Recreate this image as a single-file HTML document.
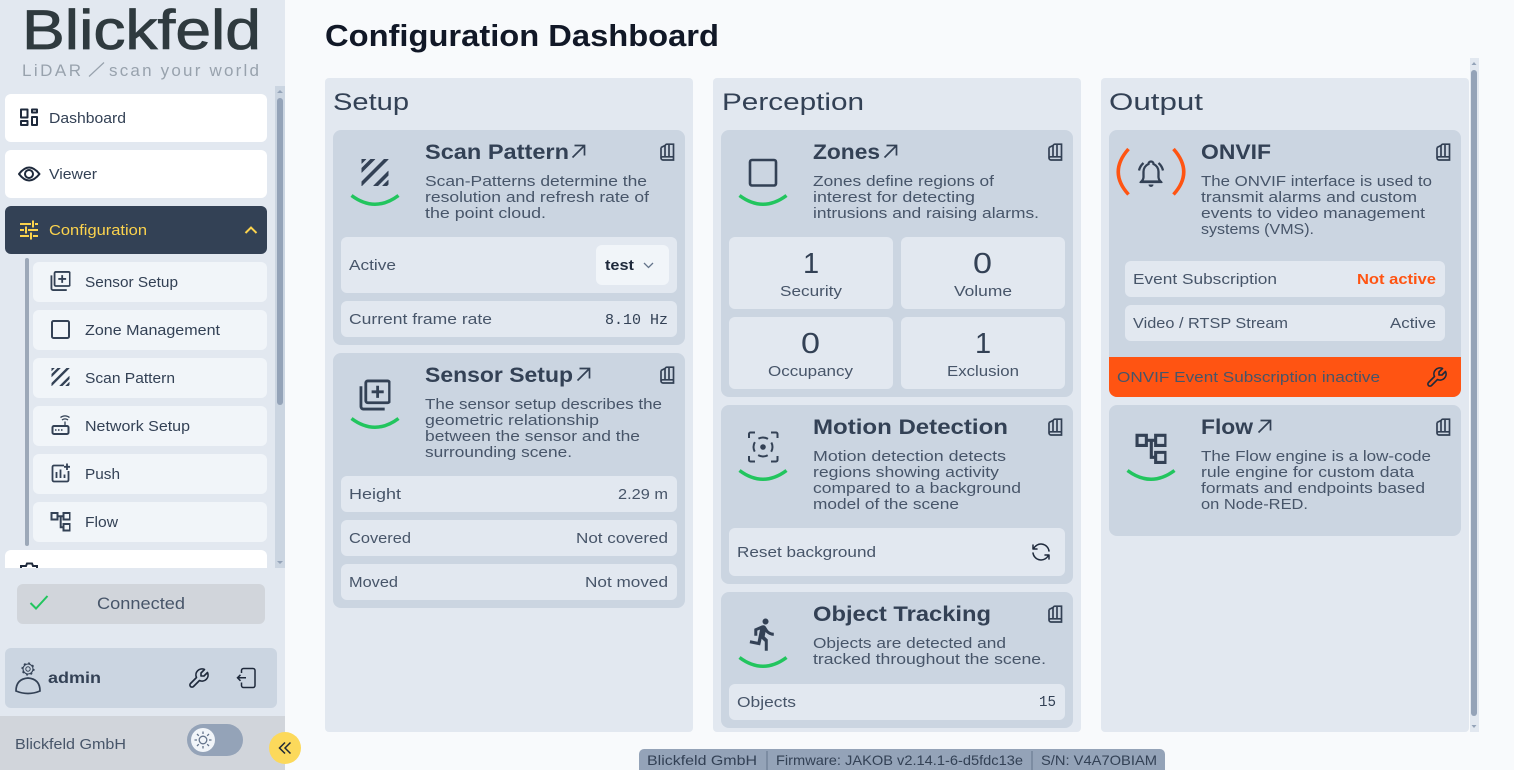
<!DOCTYPE html>
<html lang="en"><head><meta charset="utf-8"><title>Configuration Dashboard</title>
<style>
html,body{margin:0;padding:0;background:#f8fafc;overflow:hidden}
svg{display:block}
text{font-family:"Liberation Sans",sans-serif;fill:#475569;font-size:14.5px}
.n{fill:#334155}
.m{font-family:"Liberation Mono",monospace;fill:#334155;font-size:14px}
.t{font-size:21px;font-weight:700;fill:#334155}
.h{font-size:24.5px;fill:#334155}
.b{font-size:14px;fill:#334155}
.s{fill:none;stroke:#334155;stroke-width:2;stroke-linecap:round;stroke-linejoin:round}
.k{fill:none;stroke:#1e293b;stroke-width:2;stroke-linejoin:round}
</style></head><body>
<svg xmlns="http://www.w3.org/2000/svg" width="1514" height="770" viewBox="0 0 1514 770">
<defs>
<symbol id="arc" viewBox="0 0 50 16" overflow="visible"><path d="M1.5 1.5Q25 19 48.500 1.500" fill="none" stroke="#22c55e" stroke-width="3.500"/></symbol>
<symbol id="ar" viewBox="0 0 15 15"><path d="M1.500 13.500L13 2M3.500 1.500H13.500V11.500" fill="none" stroke="#334155" stroke-width="1.700"/></symbol>
<symbol id="bk" viewBox="0 0 15 18"><path d="M1 4.500V15a2 2 0 0 0 2 2H13.500V1.200H7a2 2 0 0 0-2 1.800V14M1 15a1.600 1.600 0 0 1 1.600-1.200H13.500M1 4.500L5 2.500M9 1.200V13.800" fill="none" stroke="#334155" stroke-width="1.700"/></symbol>
<symbol id="scan" viewBox="0 0 27 27"><path d="M-1 3.500L3.500-1M-1 12.500L12.500-1M-1 26L26-1M13 28L28 13M22 28L28 22" fill="none" stroke="#334155" stroke-width="3.600"/></symbol>
<symbol id="sens" viewBox="0 0 32 32"><rect x="6.500" y="1.500" width="24.500" height="22.500" rx="2" fill="none" stroke="#334155" stroke-width="2.900"/><path d="M1.500 7V28a2.500 2.500 0 0 0 2.500 2.500H26M12.500 12.700H25M18.700 6.500V19" fill="none" stroke="#334155" stroke-width="2.900"/></symbol>
<symbol id="flow" viewBox="0 0 20 20"><path d="M1 1.500H7V8H1ZM13 1.500H19.500V8H13ZM13 12.500H19.500V19H13ZM7 4.700H13M10.200 4.700V15.700H13" fill="none" stroke="#334155" stroke-width="2"/></symbol>
<symbol id="wr" viewBox="0 0 24 24"><path d="M17 10h-3v-3l3.500-3.500a6 6 0 0 0-8 8l-6 6a2 2 0 0 0 3 3l6-6a6 6 0 0 0 8-8l-3.500 3.500" fill="none" stroke="#1e293b" stroke-width="1.600" stroke-linejoin="round" stroke-linecap="round"/></symbol>
<clipPath id="nv"><rect x="0" y="86" width="285" height="482"/></clipPath>
</defs>

<rect width="1514" height="770" fill="#f8fafc"/>

<!-- sidebar -->
<rect width="285" height="770" fill="#e2e8f0"/>
<text x="22" y="49" style="font-size:56px;fill:#2f3a3f" stroke="#2f3a3f" stroke-width=".8" textLength="239" lengthAdjust="spacingAndGlyphs">Blickfeld</text>
<text x="22" y="76" style="font-size:17px;fill:#98a2ad" textLength="59" lengthAdjust="spacing">LiDAR</text>
<path d="M89 76.500L104 62.500" stroke="#98a2ad" stroke-width="1.200"/>
<text x="109" y="76" style="font-size:17px;fill:#98a2ad" textLength="150" lengthAdjust="spacing">scan your world</text>

<rect x="275" y="86" width="10" height="482" fill="#cbd5e1"/>
<rect x="277" y="98" width="6" height="307" rx="3" fill="#94a3b8"/>
<path d="M277 93h6l-3-3zM277 561h6l-3 3z" fill="#94a3b8"/>

<g clip-path="url(#nv)">
<rect x="5" y="94" width="262" height="48" rx="6" fill="#fff"/>
<rect x="5" y="150" width="262" height="48" rx="6" fill="#fff"/>
<rect x="5" y="206" width="262" height="48" rx="6" fill="#334155"/>
<rect x="25" y="258" width="4" height="288" rx="2" fill="#9ca8b8"/>
<rect x="33" y="262" width="234" height="40" rx="6" fill="#f1f5f9"/>
<rect x="33" y="310" width="234" height="40" rx="6" fill="#f1f5f9"/>
<rect x="33" y="358" width="234" height="40" rx="6" fill="#f1f5f9"/>
<rect x="33" y="406" width="234" height="40" rx="6" fill="#f1f5f9"/>
<rect x="33" y="454" width="234" height="40" rx="6" fill="#f1f5f9"/>
<rect x="33" y="502" width="234" height="40" rx="6" fill="#f1f5f9"/>
<rect x="5" y="550" width="262" height="48" rx="6" fill="#fff"/>
<path d="M21 569v-3h5l1-2.500h5l1 2.500h4v3" fill="none" stroke="#1e293b" stroke-width="2"/>
</g>

<path d="M21 109.500h6.500v8h-6.500zM32 109.500h5v3h-5zM21 121h6.500v4h-6.500zM32 117h5v8h-5z" class="k"/>
<text x="49" y="123" class="n" textLength="77" lengthAdjust="spacingAndGlyphs">Dashboard</text>
<path d="M19 174Q29 161 39.500 174Q29 187 19 174Z" class="k"/><circle cx="29" cy="174" r="4" class="k"/>
<text x="49" y="179" class="n" textLength="48" lengthAdjust="spacingAndGlyphs">Viewer</text>
<path d="M20 224h11M35 224h3M33 220.500v7M20 230h4M28 230h10M26 226.500v7M20 236h9M33 236h5M31 232.500v7" fill="none" stroke="#fcd34d" stroke-width="2"/>
<text x="49" y="235" style="fill:#fcd34d" textLength="98" lengthAdjust="spacingAndGlyphs">Configuration</text>
<path d="M245.500 233L251 227.500L256.500 233" fill="none" stroke="#fcd34d" stroke-width="2"/>

<use href="#sens" x="50.500" y="271" width="20" height="20"/>
<text x="85" y="287" class="n" textLength="93" lengthAdjust="spacingAndGlyphs">Sensor Setup</text>
<rect x="52" y="321" width="17" height="17" rx="1.500" fill="none" stroke="#334155" stroke-width="2"/>
<text x="85" y="335" class="n" textLength="135" lengthAdjust="spacingAndGlyphs">Zone Management</text>
<use href="#scan" x="51.500" y="368" width="18" height="18"/>
<text x="85" y="383" class="n" textLength="90" lengthAdjust="spacingAndGlyphs">Scan Pattern</text>
<rect x="52.500" y="426" width="16" height="8" rx="1.500" fill="none" stroke="#334155" stroke-width="2"/>
<path d="M65 421.500V426M62 420a4.500 4.500 0 0 1 6 0M60.500 417.500a7 7 0 0 1 9 0" fill="none" stroke="#334155" stroke-width="1.300"/>
<path d="M55 430h1.500M58 430h1.500M61 430h1.500" stroke="#334155" stroke-width="1.500"/>
<text x="85" y="431" class="n" textLength="105" lengthAdjust="spacingAndGlyphs">Network Setup</text>
<path d="M64 465.500H54a1.500 1.500 0 0 0-1.500 1.500V480a1.500 1.500 0 0 0 1.500 1.500H67a1.500 1.500 0 0 0 1.500-1.500V471M56.500 478V472M60.500 478V469.500M64.500 478V474.500M67 463.500V470M64 466.800H70" fill="none" stroke="#334155" stroke-width="1.800"/>
<text x="85" y="479" class="n" textLength="35" lengthAdjust="spacingAndGlyphs">Push</text>
<use href="#flow" x="50.500" y="511.500" width="20" height="20"/>
<text x="85" y="527" class="n" textLength="33" lengthAdjust="spacingAndGlyphs">Flow</text>

<rect x="17" y="584" width="248" height="40" rx="6" fill="#d1d5db"/>
<path d="M30.500 603L36 608.500L47.500 596" fill="none" stroke="#22c55e" stroke-width="2"/>
<text x="97" y="609" style="font-size:16.500px" textLength="88" lengthAdjust="spacingAndGlyphs">Connected</text>

<rect x="5" y="648" width="272" height="60" rx="6" fill="#cbd5e1"/>
<circle cx="28" cy="669" r="2.200" fill="none" stroke="#334155" stroke-width="1"/>
<circle cx="28" cy="669" r="5" fill="none" stroke="#334155" stroke-width="1.100"/>
<circle cx="28" cy="669" r="6" fill="none" stroke="#334155" stroke-width="1.200" stroke-dasharray="2 2.710"/>
<path d="M16 691Q16 679 28 678Q40 679 40 691Q28 696 16 691Z" fill="none" stroke="#334155" stroke-width="1.700"/>
<text x="48" y="683" style="font-size:16px;font-weight:700;fill:#334155" textLength="53" lengthAdjust="spacingAndGlyphs">admin</text>
<use href="#wr" x="187" y="666" width="24" height="24"/>
<path d="M241.500 673V670.500a2 2 0 0 1 2-2H253a2 2 0 0 1 2 2V685.500a2 2 0 0 1-2 2H243.500a2 2 0 0 1-2-2V682.500M237.500 677.800H246M240.500 674.800L237.500 677.800L240.500 680.800" fill="none" stroke="#1e293b" stroke-width="1.500"/>

<rect y="716" width="285" height="54" fill="#d1d5db"/>
<text x="15" y="749" textLength="111" lengthAdjust="spacingAndGlyphs">Blickfeld GmbH</text>
<rect x="187" y="724" width="56" height="32" rx="16" fill="#94a3b8"/>
<circle cx="203" cy="740" r="12" fill="#f1f5f9"/>
<circle cx="203" cy="740" r="3.800" fill="none" stroke="#64748b" stroke-width="1.300"/>
<path d="M203 731.500v2.500M203 746v2.500M194.500 740h2.500M209 740h2.500M197 734l1.800 1.800M207.200 744.200l1.800 1.800M197 746l1.800-1.800M207.200 735.800l1.800-1.800" stroke="#64748b" stroke-width="1.300"/>
<circle cx="285" cy="748" r="16" fill="#fcd95b"/>
<path d="M285 742.500L279.500 748L285 753.500M290.500 742.500L285 748L290.500 753.500" fill="none" stroke="#1f2937" stroke-width="1.500"/>

<!-- main -->
<text x="325" y="46" style="font-size:30.500px;font-weight:700;fill:#111827" textLength="394" lengthAdjust="spacingAndGlyphs">Configuration Dashboard</text>

<rect x="1470" y="58" width="9" height="674" fill="#e2e8f0"/>
<rect x="1471" y="70" width="6" height="646" rx="3" fill="#94a3b8"/>
<path d="M1471.500 65h5l-2.500-3zM1471.500 725h5l-2.500 3z" fill="#94a3b8"/>

<rect x="325" y="78" width="368" height="654" rx="4" fill="#e2e8f0"/>
<rect x="713" y="78" width="368" height="654" rx="4" fill="#e2e8f0"/>
<rect x="1101" y="78" width="368" height="654" rx="4" fill="#e2e8f0"/>
<text x="333" y="110" class="h" textLength="76" lengthAdjust="spacingAndGlyphs">Setup</text>
<text x="722" y="110" class="h" textLength="142" lengthAdjust="spacingAndGlyphs">Perception</text>
<text x="1109" y="110" class="h" textLength="94" lengthAdjust="spacingAndGlyphs">Output</text>

<!-- Setup: Scan Pattern -->
<rect x="333" y="130" width="352" height="215" rx="8" fill="#cbd5e1"/>
<use href="#scan" x="361.500" y="159" width="27" height="27"/>
<use href="#arc" x="350" y="194" width="50" height="16"/>
<text x="425" y="159" class="t" textLength="144" lengthAdjust="spacingAndGlyphs">Scan Pattern</text>
<use href="#ar" x="571" y="144" width="15" height="15"/>
<use href="#bk" x="660" y="143" width="15" height="18"/>
<text x="425" y="186" textLength="222" lengthAdjust="spacingAndGlyphs">Scan-Patterns determine the</text>
<text x="425" y="202" textLength="224" lengthAdjust="spacingAndGlyphs">resolution and refresh rate of</text>
<text x="425" y="218" textLength="121" lengthAdjust="spacingAndGlyphs">the point cloud.</text>
<rect x="341" y="237" width="336" height="56" rx="6" fill="#e2e8f0"/>
<text x="349" y="270" textLength="47" lengthAdjust="spacingAndGlyphs">Active</text>
<rect x="596" y="245" width="73" height="40" rx="6" fill="#f1f5f9"/>
<text x="605" y="270" style="font-weight:700;fill:#1e293b" textLength="29" lengthAdjust="spacingAndGlyphs">test</text>
<path d="M644 263L648.500 267.500L653 263" fill="none" stroke="#64748b" stroke-width="1.300"/>
<rect x="341" y="301" width="336" height="36" rx="6" fill="#e2e8f0"/>
<text x="349" y="324" textLength="143" lengthAdjust="spacingAndGlyphs">Current frame rate</text>
<text x="605" y="324" class="m" style="font-size:15px" textLength="63" lengthAdjust="spacingAndGlyphs">8.10 Hz</text>

<!-- Setup: Sensor Setup -->
<rect x="333" y="353" width="352" height="255" rx="8" fill="#cbd5e1"/>
<use href="#sens" x="359.500" y="379.500" width="31" height="31"/>
<use href="#arc" x="350" y="417" width="50" height="16"/>
<text x="425" y="382" class="t" textLength="148" lengthAdjust="spacingAndGlyphs">Sensor Setup</text>
<use href="#ar" x="576" y="367" width="15" height="15"/>
<use href="#bk" x="660" y="366" width="15" height="18"/>
<text x="425" y="409" textLength="237" lengthAdjust="spacingAndGlyphs">The sensor setup describes the</text>
<text x="425" y="425" textLength="174" lengthAdjust="spacingAndGlyphs">geometric relationship</text>
<text x="425" y="441" textLength="215" lengthAdjust="spacingAndGlyphs">between the sensor and the</text>
<text x="425" y="457" textLength="147" lengthAdjust="spacingAndGlyphs">surrounding scene.</text>
<rect x="341" y="476" width="336" height="36" rx="6" fill="#e2e8f0"/>
<text x="349" y="499" textLength="52" lengthAdjust="spacingAndGlyphs">Height</text>
<text x="618" y="499" textLength="50" lengthAdjust="spacingAndGlyphs">2.29 m</text>
<rect x="341" y="520" width="336" height="36" rx="6" fill="#e2e8f0"/>
<text x="349" y="543" textLength="62" lengthAdjust="spacingAndGlyphs">Covered</text>
<text x="576" y="543" textLength="92" lengthAdjust="spacingAndGlyphs">Not covered</text>
<rect x="341" y="564" width="336" height="36" rx="6" fill="#e2e8f0"/>
<text x="349" y="587" textLength="49" lengthAdjust="spacingAndGlyphs">Moved</text>
<text x="585" y="587" textLength="83" lengthAdjust="spacingAndGlyphs">Not moved</text>

<!-- Perception: Zones -->
<rect x="721" y="130" width="352" height="267" rx="8" fill="#cbd5e1"/>
<rect x="750" y="160" width="26" height="25.500" rx="2" fill="none" stroke="#334155" stroke-width="2.600"/>
<use href="#arc" x="738" y="194" width="50" height="16"/>
<text x="813" y="159" class="t" textLength="67" lengthAdjust="spacingAndGlyphs">Zones</text>
<use href="#ar" x="883" y="144" width="15" height="15"/>
<use href="#bk" x="1048" y="143" width="15" height="18"/>
<text x="813" y="186" textLength="181" lengthAdjust="spacingAndGlyphs">Zones define regions of</text>
<text x="813" y="202" textLength="162" lengthAdjust="spacingAndGlyphs">interest for detecting</text>
<text x="813" y="218" textLength="226" lengthAdjust="spacingAndGlyphs">intrusions and raising alarms.</text>
<rect x="729" y="237" width="164" height="72" rx="6" fill="#e2e8f0"/>
<rect x="901" y="237" width="164" height="72" rx="6" fill="#e2e8f0"/>
<rect x="729" y="317" width="164" height="72" rx="6" fill="#e2e8f0"/>
<rect x="901" y="317" width="164" height="72" rx="6" fill="#e2e8f0"/>
<text x="803" y="273" style="font-size:29px;fill:#334155">1</text>
<text x="973" y="273" style="font-size:29px;fill:#334155" textLength="19" lengthAdjust="spacingAndGlyphs">0</text>
<text x="801" y="353" style="font-size:29px;fill:#334155" textLength="19" lengthAdjust="spacingAndGlyphs">0</text>
<text x="975" y="353" style="font-size:29px;fill:#334155">1</text>
<text x="780" y="296" textLength="62" lengthAdjust="spacingAndGlyphs">Security</text>
<text x="954" y="296" textLength="58" lengthAdjust="spacingAndGlyphs">Volume</text>
<text x="768" y="376" textLength="85" lengthAdjust="spacingAndGlyphs">Occupancy</text>
<text x="947" y="376" textLength="72" lengthAdjust="spacingAndGlyphs">Exclusion</text>

<!-- Perception: Motion -->
<rect x="721" y="405" width="352" height="179" rx="8" fill="#cbd5e1"/>
<path d="M749 438V434a1.500 1.500 0 0 1 1.500-1.500H755M771 432.500H776a1.500 1.500 0 0 1 1.500 1.500V438M777.500 456V460a1.500 1.500 0 0 1-1.500 1.500H771M755 461.500H750.500a1.500 1.500 0 0 1-1.500-1.500V456" fill="none" stroke="#334155" stroke-width="2"/>
<circle cx="763" cy="447" r="9.500" fill="none" stroke="#334155" stroke-width="2" stroke-dasharray="10 4.900" stroke-dashoffset="5"/>
<circle cx="763" cy="447" r="2.800" fill="#334155"/>
<use href="#arc" x="738" y="469" width="50" height="16"/>
<text x="813" y="434" class="t" textLength="195" lengthAdjust="spacingAndGlyphs">Motion Detection</text>
<use href="#bk" x="1048" y="418" width="15" height="18"/>
<text x="813" y="461" textLength="193" lengthAdjust="spacingAndGlyphs">Motion detection detects</text>
<text x="813" y="477" textLength="186" lengthAdjust="spacingAndGlyphs">regions showing activity</text>
<text x="813" y="493" textLength="208" lengthAdjust="spacingAndGlyphs">compared to a background</text>
<text x="813" y="509" textLength="146" lengthAdjust="spacingAndGlyphs">model of the scene</text>
<rect x="729" y="528" width="336" height="48" rx="6" fill="#e2e8f0"/>
<text x="737" y="557" textLength="139" lengthAdjust="spacingAndGlyphs">Reset background</text>
<g transform="translate(1029 540)" fill="none" stroke="#1e293b" stroke-width="1.500" stroke-linecap="round" stroke-linejoin="round"><path d="M20 11a8.100 8.100 0 0 0-15.500-2m-.5-4v4h4"/><path d="M4 13a8.100 8.100 0 0 0 15.500 2m.5 4v-4h-4"/></g>

<!-- Perception: Tracking -->
<rect x="721" y="592" width="352" height="136" rx="8" fill="#cbd5e1"/>
<path transform="translate(745.300 616.300) scale(1.500)" fill="#334155" d="M13.490 5.480c1.100 0 2-.9 2-2s-.9-2-2-2-2 .9-2 2 .9 2 2 2zm-3.600 13.900l1-4.400 2.100 2v6h2v-7.500l-2.100-2 .6-3c1.300 1.500 3.300 2.500 5.500 2.500v-2c-1.900 0-3.500-1-4.300-2.400l-1-1.600c-.4-.6-1-1-1.700-1-.3 0-.5.1-.8.1l-5.200 2.200v4.700h2v-3.400l1.800-.7-1.600 8.100-4.900-1-.4 2 7 1.400z"/>
<use href="#arc" x="738" y="656" width="50" height="16"/>
<text x="813" y="621" class="t" textLength="178" lengthAdjust="spacingAndGlyphs">Object Tracking</text>
<use href="#bk" x="1048" y="605" width="15" height="18"/>
<text x="813" y="648" textLength="193" lengthAdjust="spacingAndGlyphs">Objects are detected and</text>
<text x="813" y="664" textLength="233" lengthAdjust="spacingAndGlyphs">tracked throughout the scene.</text>
<rect x="729" y="684" width="336" height="36" rx="6" fill="#e2e8f0"/>
<text x="737" y="707" textLength="59" lengthAdjust="spacingAndGlyphs">Objects</text>
<text x="1039" y="706" class="m" style="font-size:15px" textLength="17" lengthAdjust="spacingAndGlyphs">15</text>

<!-- Output: ONVIF -->
<rect x="1109" y="130" width="352" height="267" rx="8" fill="#cbd5e1"/>
<path d="M1109 357H1461V389a8 8 0 0 1-8 8H1117a8 8 0 0 1-8-8Z" fill="#ff5412"/>
<path d="M1128.500 149Q1108 172 1128.500 194.500M1173.500 149Q1194 172 1173.500 194.500" fill="none" stroke="#ff5412" stroke-width="3.500"/>
<g transform="translate(1136 156)" fill="none" stroke="#334155" stroke-width="2.300">
<path d="M12.500 8a2.500 2.500 0 0 1 5 0a8.500 8.500 0 0 1 5 8V20a7 7 0 0 0 2 5.500H5.500A7 7 0 0 0 7.500 20V16a8.500 8.500 0 0 1 5-8Z"/>
<path d="M3 14.500a14 14 0 0 1 4.500-7.500M27 14.500a14 14 0 0 0-4.500-7.500M4 26H26"/>
<path d="M12.500 28.500a2.500 2.500 0 0 0 5 0Z" fill="#334155" stroke="none"/>
</g>
<text x="1201" y="159" class="t" textLength="70" lengthAdjust="spacingAndGlyphs">ONVIF</text>
<use href="#bk" x="1436" y="143" width="15" height="18"/>
<text x="1201" y="186" textLength="231" lengthAdjust="spacingAndGlyphs">The ONVIF interface is used to</text>
<text x="1201" y="202" textLength="216" lengthAdjust="spacingAndGlyphs">transmit alarms and custom</text>
<text x="1201" y="218" textLength="224" lengthAdjust="spacingAndGlyphs">events to video management</text>
<text x="1201" y="234" textLength="113" lengthAdjust="spacingAndGlyphs">systems (VMS).</text>
<rect x="1125" y="261" width="320" height="36" rx="6" fill="#e2e8f0"/>
<text x="1133" y="284" textLength="144" lengthAdjust="spacingAndGlyphs">Event Subscription</text>
<text x="1357" y="284" style="font-weight:700;fill:#ff5412" textLength="79" lengthAdjust="spacingAndGlyphs">Not active</text>
<rect x="1125" y="305" width="320" height="36" rx="6" fill="#e2e8f0"/>
<text x="1133" y="328" textLength="155" lengthAdjust="spacingAndGlyphs">Video / RTSP Stream</text>
<text x="1390" y="328" textLength="46" lengthAdjust="spacingAndGlyphs">Active</text>
<text x="1117" y="382" textLength="263" lengthAdjust="spacingAndGlyphs">ONVIF Event Subscription inactive</text>
<use href="#wr" x="1425" y="365" width="24" height="24"/>

<!-- Output: Flow -->
<rect x="1109" y="405" width="352" height="131" rx="8" fill="#cbd5e1"/>
<use href="#flow" x="1135.500" y="433" width="31" height="31"/>
<use href="#arc" x="1126" y="469" width="50" height="16"/>
<text x="1201" y="434" class="t" textLength="52" lengthAdjust="spacingAndGlyphs">Flow</text>
<use href="#ar" x="1257" y="419" width="15" height="15"/>
<use href="#bk" x="1436" y="418" width="15" height="18"/>
<text x="1201" y="461" textLength="230" lengthAdjust="spacingAndGlyphs">The Flow engine is a low-code</text>
<text x="1201" y="477" textLength="213" lengthAdjust="spacingAndGlyphs">rule engine for custom data</text>
<text x="1201" y="493" textLength="224" lengthAdjust="spacingAndGlyphs">formats and endpoints based</text>
<text x="1201" y="509" textLength="107" lengthAdjust="spacingAndGlyphs">on Node-RED.</text>

<!-- status bar -->
<path d="M639 770V754a5 5 0 0 1 5-5H1160a5 5 0 0 1 5 5V770Z" fill="#94a3b8"/>
<path d="M767 751V770M1032 751V770" stroke="#64748b" stroke-width="1"/>
<text x="647" y="765" class="b" textLength="110" lengthAdjust="spacingAndGlyphs">Blickfeld GmbH</text>
<text x="776" y="765" class="b" textLength="247" lengthAdjust="spacingAndGlyphs">Firmware: JAKOB v2.14.1-6-d5fdc13e</text>
<text x="1041" y="765" class="b" textLength="116" lengthAdjust="spacingAndGlyphs">S/N: V4A7OBIAM</text>
</svg>
</body></html>
